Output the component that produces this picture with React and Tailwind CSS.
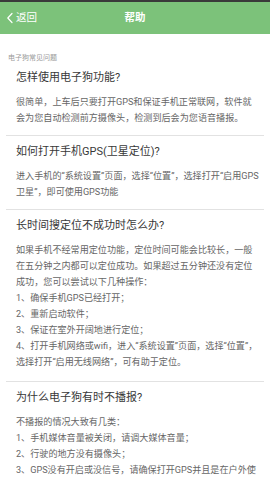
import React from "react";

const SECTIONS = [
  {
    q: "怎样使用电子狗功能?",
    lines: [
      "很简单，上车后只要打开GPS和保证手机正常联网，软件就",
      "会为您自动检测前方摄像头，检测到后会为您语音播报。",
    ],
  },
  {
    q: "如何打开手机GPS(卫星定位)?",
    lines: [
      "进入手机的“系统设置”页面，选择“位置”，选择打开“启用GPS",
      "卫星”，即可使用GPS功能",
    ],
  },
  {
    q: "长时间搜定位不成功时怎么办?",
    lines: [
      "如果手机不经常用定位功能，定位时间可能会比较长，一般",
      "在五分钟之内都可以定位成功。如果超过五分钟还没有定位",
      "成功，您可以尝试以下几种操作：",
      "1、确保手机GPS已经打开；",
      "2、重新启动软件；",
      "3、保证在室外开阔地进行定位；",
      "4、打开手机网络或wifi，进入“系统设置”页面，选择“位置”，",
      "选择打开“启用无线网络”，可有助于定位。",
    ],
  },
  {
    q: "为什么电子狗有时不播报?",
    lines: [
      "不播报的情况大致有几类：",
      "1、手机媒体音量被关闭，请调大媒体音量；",
      "2、行驶的地方没有摄像头；",
      "3、GPS没有开启或没信号，请确保打开GPS并且是在户外使",
    ],
  },
];

const App = () => {
  return (
    <div className="w-[270px] h-[480px] overflow-hidden bg-white font-['Roboto','Noto_Sans_CJK_SC',sans-serif]">
      {/* status strip + title bar */}
      <div className="h-[2px] bg-[#3a3a3a]" />
      <div className="relative flex h-[32px] items-center justify-center bg-[#7cc27a] text-white">
        <div className="absolute left-[6px] top-0 flex h-full items-center gap-[2px]">
          <svg width="8" height="12" viewBox="0 0 8 12" fill="none">
            <polyline
              points="6,1.5 1.8,6 6,10.5"
              stroke="white"
              strokeWidth="1.2"
              strokeLinecap="round"
              strokeLinejoin="round"
            />
          </svg>
          <span className="text-[10.5px] leading-none">返回</span>
        </div>
        <span className="text-[10.5px] font-bold leading-none">帮助</span>
      </div>

      <div className="mt-[19px] px-[8px] text-[7px] leading-[10px] text-[#9a9a9a]">
        电子狗常见问题
      </div>

      <div className="mt-[5px]">
        {SECTIONS.map((s, i) => (
          <div
            key={i}
            className={`mx-[6px] border-b border-[#e2e2e2] px-[10px] ${
              i === 0 ? "pb-[9px]" : i === 2 ? "pt-[6px] pb-[11px]" : "pt-[6px] pb-[9px]"
            }`}
          >
            <div className="text-[11px] leading-[20px] text-[#383838] whitespace-nowrap">
              {s.q}
            </div>
            <div className="mt-[6px] text-[9.1px] leading-[16px] text-[#666666]">
              {s.lines.map((l, j) => (
                <div key={j} className="whitespace-nowrap">
                  {l}
                </div>
              ))}
            </div>
          </div>
        ))}
      </div>
    </div>
  );
};

export default App;
